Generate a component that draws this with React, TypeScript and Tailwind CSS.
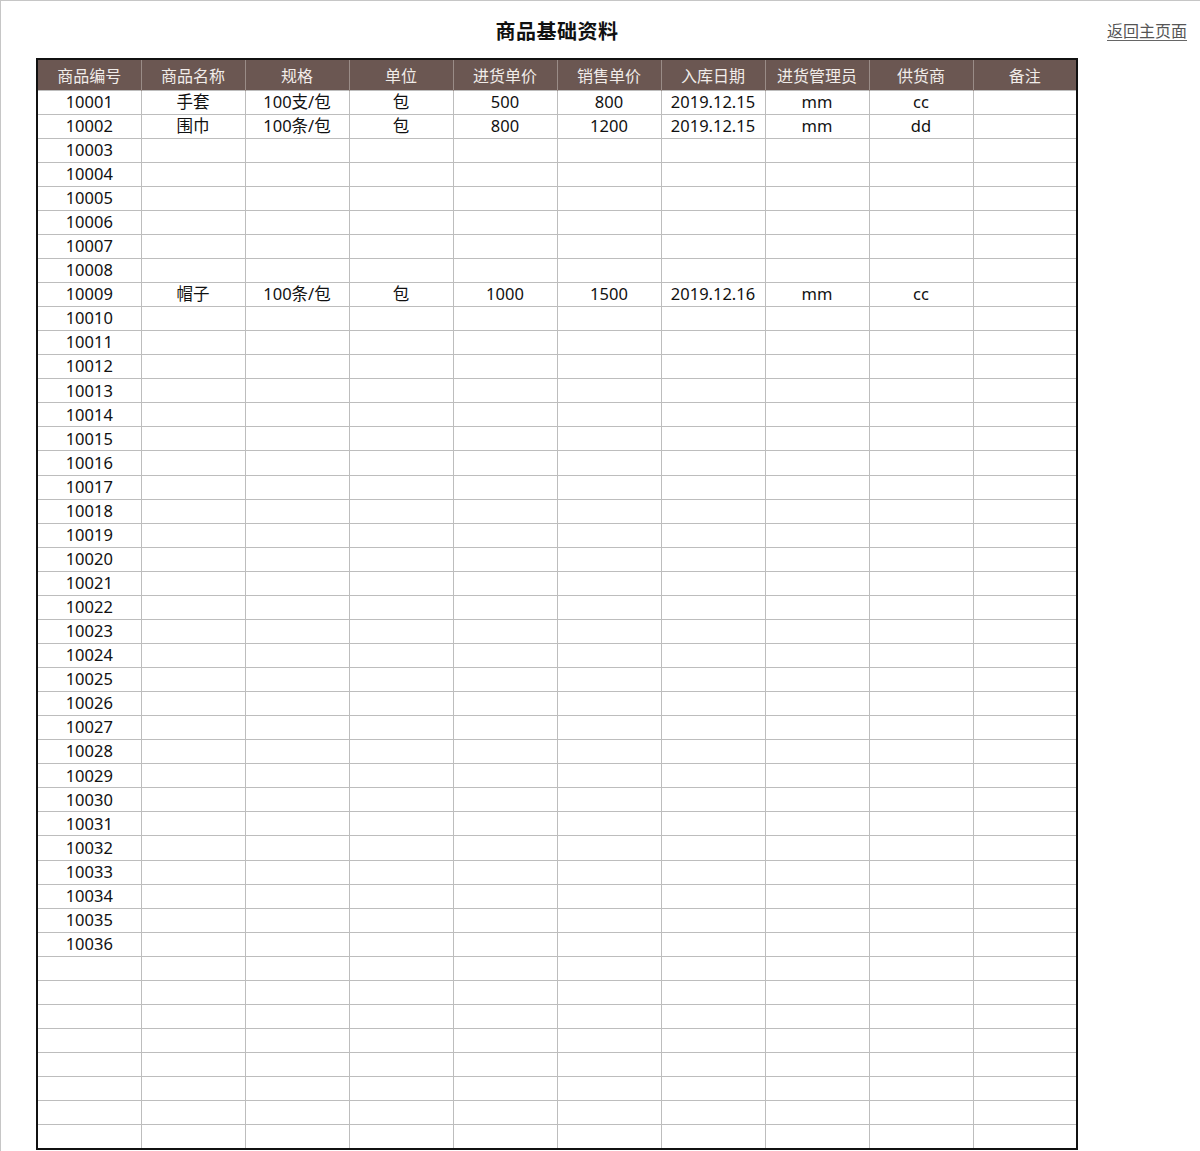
import React from 'react';

const headers = ['商品编号', '商品名称', '规格', '单位', '进货单价', '销售单价', '入库日期', '进货管理员', '供货商', '备注'];

const filled: Record<number, string[]> = {
  10001: ['手套', '100支/包', '包', '500', '800', '2019.12.15', 'mm', 'cc', ''],
  10002: ['围巾', '100条/包', '包', '800', '1200', '2019.12.15', 'mm', 'dd', ''],
  10009: ['帽子', '100条/包', '包', '1000', '1500', '2019.12.16', 'mm', 'cc', ''],
};

const rows = Array.from({ length: 44 }, (_, i) => {
  if (i >= 36) return Array(10).fill('');
  const id = 10001 + i;
  return [String(id), ...(filled[id] || Array(9).fill(''))];
});

export default function App() {
  return (
    <div
      className="h-[1151px] w-[1200px] border-t border-l border-[#c6c6c6] bg-white text-[#111] overflow-hidden"
      style={{ fontFamily: '"Noto Sans", "Noto Sans CJK SC", sans-serif' }}
    >
      <div className="flex pl-[35px]">
        <div className="w-[1042px]">
          <div className="h-[57px] flex items-center justify-center pt-[3px]">
            <h1 className="text-[20px] font-bold tracking-[0.5px]" style={{ fontFamily: '"Noto Sans CJK SC", sans-serif' }}>
              商品基础资料
            </h1>
          </div>
          <table className="w-[1042px] table-fixed border-collapse border-2 border-[#111]">
            <thead>
              <tr className="h-[31px] bg-[#6b5752]">
                {headers.map((h) => (
                  <th
                    key={h}
                    className="border-x border-[#9a8c87] text-[16px] font-normal text-[#f1ece9] text-center leading-none"
                    style={{ fontFamily: '"Noto Sans CJK SC", sans-serif' }}
                  >
                    {h}
                  </th>
                ))}
              </tr>
            </thead>
            <tbody>
              {rows.map((r, i) => (
                <tr key={i} className="h-[24.07px]">
                  {r.map((c, j) => (
                    <td
                      key={j}
                      className="border border-[#bdbdbd] p-0 text-center text-[16.5px] leading-none text-[#111]"
                    >
                      {c}
                    </td>
                  ))}
                </tr>
              ))}
            </tbody>
          </table>
        </div>
        <div className="pl-[29px] pt-[17px]">
          <a
            href="#"
            className="text-[16px] text-[#555] underline underline-offset-[3px] decoration-[#666]"
            style={{ fontFamily: '"Noto Sans CJK SC", sans-serif' }}
          >
            返回主页面
          </a>
        </div>
      </div>
    </div>
  );
}
